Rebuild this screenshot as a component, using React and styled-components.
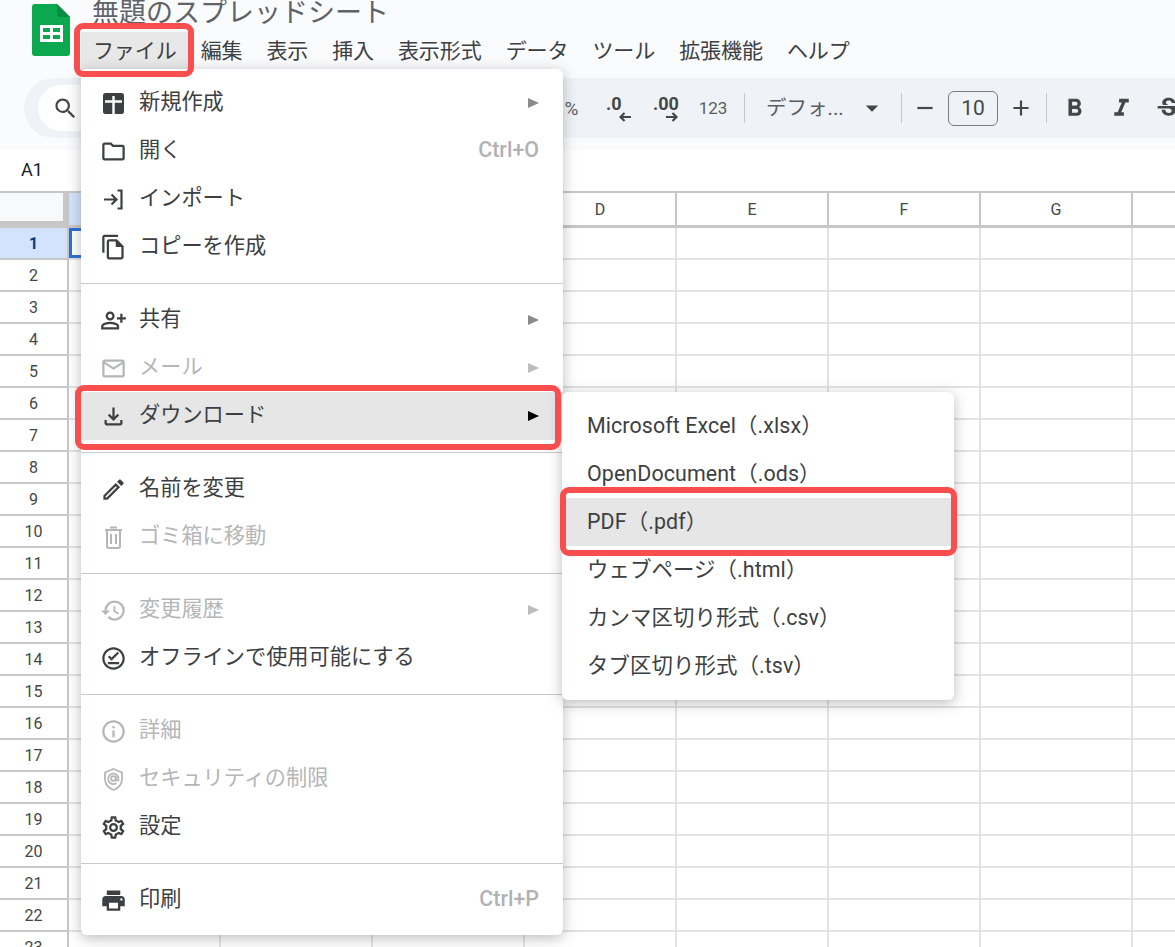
import styled, { createGlobalStyle } from "styled-components";
import {
  MdAdd,
  MdArrowDropDown,
  MdFormatBold,
  MdFormatItalic,
  MdHistory,
  MdInfoOutline,
  MdOutlineEdit,
  MdOutlineFileCopy,
  MdOutlineFileDownload,
  MdOutlineFolder,
  MdOutlineMail,
  MdOutlineOfflinePin,
  MdOutlinePersonAddAlt,
  MdOutlineSettings,
  MdPrint,
  MdRemove,
  MdSearch,
  MdStrikethroughS,
} from "react-icons/md";

const GlobalStyle = createGlobalStyle`
  html, body {
    margin: 0;
    height: 100%;
    background: #fff;
  }
  body {
    font-family: Roboto, "Noto Sans CJK JP", sans-serif;
    color: #3c4043;
  }
`;

function SheetsLogo() {
  return (
    <svg width="38" height="52" viewBox="0 0 38 52">
      <path
        d="M3 0H25L38 13V49a3 3 0 0 1-3 3H3a3 3 0 0 1-3-3V3a3 3 0 0 1 3-3Z"
        fill="#0ca84f"
      />
      <path d="M25 0L38 13H28a3 3 0 0 1-3-3Z" fill="#0b8a41" />
      <path
        d="M8 21H31V38H8ZM11 24V28H18V24ZM21 24V28H28V24ZM11 31V35H18V31ZM21 31V35H28V31Z"
        fill="#fff"
        fillRule="evenodd"
      />
    </svg>
  );
}

function NewIcon() {
  return (
    <svg width="27" height="27" viewBox="0 0 27 27">
      <rect x="3" y="3" width="21" height="21" rx="2.500" fill="currentColor" />
      <path d="M5 11.500H22M13.500 6V24" stroke="#fff" strokeWidth="2.400" fill="none" />
    </svg>
  );
}

function ImportIcon() {
  return (
    <svg width="27" height="27" viewBox="0 0 27 27" fill="none" stroke="currentColor" strokeWidth="2.200">
      <path d="M4 13.500H16M11.500 8.500L16.500 13.500L11.500 18.500" />
      <path d="M17.500 4.500H21.500V22.500H17.500" />
    </svg>
  );
}

function TrashIcon() {
  return (
    <svg width="27" height="27" viewBox="0 0 27 27" fill="none" stroke="currentColor" strokeWidth="2">
      <path d="M5 6H22M10 3.500H17M7 6V22a2 2 0 0 0 2 2H18a2 2 0 0 0 2-2V6" />
      <path d="M11 10V20M16 10V20" />
    </svg>
  );
}

function ShieldIcon() {
  return (
    <svg width="27" height="27" viewBox="0 0 27 27" fill="none" stroke="currentColor" strokeWidth="1.800">
      <path d="M13.500 3L22 6.500V13C22 18 18.500 22 13.500 24C8.500 22 5 18 5 13V6.500Z" />
      <circle cx="13.500" cy="12.500" r="2.300" />
      <path d="M18.500 13.500A5.200 5.200 0 1 0 16.500 17M15.800 10.500V13.500a1.400 1.400 0 0 0 2.700 0" />
    </svg>
  );
}

function SmallArrow({ flip }) {
  return (
    <svg width="12" height="10" viewBox="0 0 12 10" fill="none" stroke="currentColor" strokeWidth="2.200">
      {flip ? (
        <path d="M0 5H10M6.500 1L10.500 5L6.500 9" />
      ) : (
        <path d="M12 5H2M5.500 1L1.500 5L5.500 9" />
      )}
    </svg>
  );
}

const mainGroups = [
  [
    { icon: <NewIcon />, label: "新規作成", arrow: true },
    { icon: <MdOutlineFolder />, label: "開く", shortcut: "Ctrl+O" },
    { icon: <ImportIcon />, label: "インポート" },
    { icon: <MdOutlineFileCopy size={30} />, label: "コピーを作成" },
  ],
  [
    { icon: <MdOutlinePersonAddAlt size={29} />, label: "共有", arrow: true },
    { icon: <MdOutlineMail size={29} />, label: "メール", arrow: true, disabled: true },
    { icon: <MdOutlineFileDownload />, label: "ダウンロード", arrow: true, active: true },
  ],
  [
    { icon: <MdOutlineEdit />, label: "名前を変更" },
    { icon: <TrashIcon />, label: "ゴミ箱に移動", disabled: true },
  ],
  [
    { icon: <MdHistory />, label: "変更履歴", arrow: true, disabled: true },
    { icon: <MdOutlineOfflinePin size={29} />, label: "オフラインで使用可能にする" },
  ],
  [
    { icon: <MdInfoOutline size={29} />, label: "詳細", disabled: true },
    { icon: <ShieldIcon />, label: "セキュリティの制限", disabled: true },
    { icon: <MdOutlineSettings size={29} />, label: "設定" },
  ],
  [{ icon: <MdPrint size={29} />, label: "印刷", shortcut: "Ctrl+P" }],
];

const downloadItems = [
  "Microsoft Excel（.xlsx）",
  "OpenDocument（.ods）",
  "PDF（.pdf）",
  "ウェブページ（.html）",
  "カンマ区切り形式（.csv）",
  "タブ区切り形式（.tsv）",
];

const menuNames = ["編集", "表示", "挿入", "表示形式", "データ", "ツール", "拡張機能", "ヘルプ"];
const columns = ["A", "B", "C", "D", "E", "F", "G", "H"];
const rows = Array.from({ length: 23 }, (_, i) => i + 1);

export default function App() {
  return (
    <Page>
      <GlobalStyle />
      <Header>
        <TopRow>
          <LogoSlot>
            <SheetsLogo />
          </LogoSlot>
          <TitleColumn>
            <Title>無題のスプレッドシート</Title>
            <MenuBar>
              <MenuName $open>ファイル</MenuName>
              {menuNames.map((name) => (
                <MenuName key={name}>{name}</MenuName>
              ))}
            </MenuBar>
          </TitleColumn>
        </TopRow>
        <Toolbar>
          <SearchPill>
            <MdSearch />
          </SearchPill>
          <ToolText $width={47}>%</ToolText>
          <DecimalButton>
            <b>.0</b>
            <SmallArrow />
          </DecimalButton>
          <DecimalButton>
            <b>.00</b>
            <SmallArrow flip />
          </DecimalButton>
          <ToolText $width={48} $small>
            123
          </ToolText>
          <ToolDivider $before={7} />
          <FontPicker>
            <span>デフォ...</span>
            <MdArrowDropDown />
          </FontPicker>
          <ToolDivider />
          <ToolIcon>
            <MdRemove />
          </ToolIcon>
          <SizeBox>10</SizeBox>
          <ToolIcon>
            <MdAdd />
          </ToolIcon>
          <ToolDivider $before={2} $after={4} />
          <ToolIcon $wide>
            <MdFormatBold />
          </ToolIcon>
          <ToolIcon $wide>
            <MdFormatItalic />
          </ToolIcon>
          <ToolIcon $wide>
            <MdStrikethroughS />
          </ToolIcon>
        </Toolbar>
      </Header>

      <FormulaBar>A1</FormulaBar>

      <Sheet>
        <ColumnRow>
          <Corner />
          {columns.map((col) => (
            <ColumnHead key={col} $selected={col === "A"}>
              {col}
            </ColumnHead>
          ))}
        </ColumnRow>
        {rows.map((row) => (
          <SheetRow key={row}>
            <RowHead $selected={row === 1}>{row}</RowHead>
            {columns.map((col) => (
              <Cell key={col} $selected={row === 1 && col === "A"} />
            ))}
          </SheetRow>
        ))}
      </Sheet>

      <FileMenu>
        {mainGroups.map((group, i) => (
          <MenuGroup key={i}>
            {group.map((item) => (
              <MenuItem key={item.label} $disabled={item.disabled} $active={item.active}>
                <ItemIcon>{item.icon}</ItemIcon>
                <ItemLabel>{item.label}</ItemLabel>
                {item.shortcut && <Shortcut>{item.shortcut}</Shortcut>}
                {item.arrow && <Arrow $active={item.active} $disabled={item.disabled} />}
              </MenuItem>
            ))}
          </MenuGroup>
        ))}
      </FileMenu>

      <SubMenu>
        {downloadItems.map((label) => (
          <SubItem key={label} $active={label.startsWith("PDF")}>
            {label}
          </SubItem>
        ))}
      </SubMenu>

      <RedBox $x={74} $y={23} $w={120} $h={54} />
      <RedBox $x={75} $y={385} $w={486} $h={65} />
      <RedBox $x={560} $y={487} $w={397} $h={69} />
    </Page>
  );
}

const Page = styled.div`
  position: relative;
  width: 1175px;
  height: 947px;
  overflow: hidden;
  background: #fff;
`;

const Header = styled.header`
  height: 150px;
  background: #f9fbfd;
  box-sizing: border-box;
`;

const TopRow = styled.div`
  display: flex;
  height: 78px;
  padding-left: 32px;
`;

const LogoSlot = styled.div`
  width: 49px;
  padding-top: 4px;
`;

const TitleColumn = styled.div`
  display: flex;
  flex-direction: column;
`;

const Title = styled.div`
  height: 32px;
  margin-left: 11px;
  font-size: 27px;
  line-height: 27px;
  color: #5f6368;
  white-space: nowrap;
`;

const MenuBar = styled.nav`
  display: flex;
`;

const MenuName = styled.div`
  height: 38px;
  padding: 0 11.880px;
  font-size: 21px;
  line-height: 38px;
  color: #3c4043;
  white-space: nowrap;
  background: ${(p) => (p.$open ? "#e8e8e8" : "transparent")};
`;

const Toolbar = styled.div`
  display: flex;
  align-items: center;
  height: 60px;
  margin-left: 24px;
  padding-left: 14px;
  background: #eff3f8;
  border-radius: 30px 0 0 30px;
  color: #444746;
`;

const SearchPill = styled.div`
  display: flex;
  align-items: center;
  width: 510px;
  height: 46px;
  padding-left: 14px;
  box-sizing: border-box;
  flex-shrink: 0;
  background: #fff;
  border-radius: 23px;
  font-size: 27px;
`;

const ToolText = styled.div`
  width: ${(p) => p.$width}px;
  flex-shrink: 0;
  text-align: center;
  font-size: ${(p) => (p.$small ? "17px" : "19px")};
  color: #5a5d60;
`;

const DecimalButton = styled.div`
  display: flex;
  flex-direction: column;
  justify-content: center;
  width: 47px;
  height: 38px;
  padding: 0 11px;
  box-sizing: border-box;
  flex-shrink: 0;
  font-size: 18px;
  line-height: 17px;

  b {
    font-weight: 700;
    white-space: nowrap;
  }

  svg {
    align-self: flex-end;
    flex-shrink: 0;
  }
`;

const ToolDivider = styled.div`
  width: 1px;
  height: 30px;
  flex-shrink: 0;
  margin-left: ${(p) => p.$before || 0}px;
  margin-right: ${(p) => p.$after || 0}px;
  background: #c7c7c7;
`;

const FontPicker = styled.div`
  display: flex;
  align-items: center;
  justify-content: space-between;
  width: 156px;
  padding: 0 14px 0 21px;
  box-sizing: border-box;
  flex-shrink: 0;
  font-size: 20.500px;
  color: #5a5d60;

  span {
    margin-bottom: 4px;
  }

  svg {
    font-size: 30px;
    color: #444746;
  }
`;

const ToolIcon = styled.div`
  display: flex;
  align-items: center;
  justify-content: center;
  width: ${(p) => (p.$wide ? "47px" : "46px")};
  flex-shrink: 0;
  font-size: ${(p) => (p.$wide ? "29px" : "26px")};
`;

const SizeBox = styled.div`
  width: 50px;
  height: 35px;
  flex-shrink: 0;
  box-sizing: border-box;
  border: 1px solid #7a7d80;
  border-radius: 6px;
  text-align: center;
  font-size: 21px;
  line-height: 33px;
  color: #444746;
`;

const FormulaBar = styled.div`
  height: 41px;
  padding-left: 21px;
  font-size: 18px;
  line-height: 40px;
  color: #202124;
`;

const Sheet = styled.div`
  display: flex;
  flex-direction: column;
`;

const ColumnRow = styled.div`
  display: flex;
  height: 37px;
  box-sizing: border-box;
  border-top: 2px solid #c7c7c7;
`;

const Corner = styled.div`
  width: 69px;
  height: 100%;
  box-sizing: border-box;
  flex-shrink: 0;
  background: #f8f9fa;
  border-right: 6px solid #c7c7c7;
  border-bottom: 7px solid #c7c7c7;
`;

const ColumnHead = styled.div`
  width: 152px;
  flex-shrink: 0;
  box-sizing: border-box;
  border-right: 2px solid #c7c7c7;
  border-bottom: 3px solid #c7c7c7;
  background: ${(p) => (p.$selected ? "#d3e3fd" : "#fff")};
  text-align: center;
  font-size: 16px;
  line-height: 34px;
  color: #444746;
`;

const SheetRow = styled.div`
  display: flex;
  height: 32px;
`;

const RowHead = styled.div`
  width: 69px;
  flex-shrink: 0;
  box-sizing: border-box;
  border-right: 2px solid #c7c7c7;
  border-bottom: 2px solid #c7c7c7;
  background: ${(p) => (p.$selected ? "#d3e3fd" : "#fff")};
  text-align: center;
  font-size: 16px;
  font-weight: ${(p) => (p.$selected ? 700 : 400)};
  line-height: 31px;
  color: ${(p) => (p.$selected ? "#0b3c7a" : "#444746")};
`;

const Cell = styled.div`
  width: 152px;
  flex-shrink: 0;
  box-sizing: border-box;
  border-right: 2px solid #e2e2e2;
  border-bottom: 2px solid #e2e2e2;
  box-shadow: ${(p) => (p.$selected ? "inset 0 0 0 3px #2a6fdb" : "none")};
`;

const FileMenu = styled.div`
  position: absolute;
  left: 81px;
  top: 69px;
  width: 482px;
  padding-top: 10px;
  box-sizing: border-box;
  background: #fff;
  border-radius: 6px;
  box-shadow: 0 3px 14px rgba(60, 64, 67, 0.35);
`;

const MenuGroup = styled.div`
  padding-bottom: 12px;

  & + & {
    padding-top: 12px;
    border-top: 1px solid #c9c9c9;
  }

  &:last-child {
    padding-bottom: 11px;
  }
`;

const MenuItem = styled.div`
  display: flex;
  align-items: center;
  height: 48px;
  padding: 0 24px 0 19px;
  background: ${(p) => (p.$active ? "#e6e6e6" : "transparent")};
  color: ${(p) => (p.$disabled ? "#b4b6b8" : "#3c4043")};
`;

const ItemIcon = styled.div`
  display: flex;
  align-items: center;
  justify-content: center;
  width: 27px;
  height: 27px;
  margin-right: 12px;
  font-size: 27px;
`;

const ItemLabel = styled.div`
  flex: 1;
  padding-bottom: 2px;
  font-size: 21.200px;
  line-height: 46px;
  white-space: nowrap;
`;

const Shortcut = styled.div`
  padding-bottom: 2px;
  font-size: 21.400px;
  font-weight: 500;
  line-height: 46px;
  color: #b0b2b4;
`;

const Arrow = styled.div`
  width: 0;
  height: 0;
  border-top: 5.500px solid transparent;
  border-bottom: 5.500px solid transparent;
  border-left: 11px solid
    ${(p) => (p.$active ? "#000" : p.$disabled ? "#bdbdbd" : "#8a8a8a")};
`;

const SubMenu = styled.div`
  position: absolute;
  left: 562px;
  top: 392px;
  width: 392px;
  padding: 10px 0;
  box-sizing: border-box;
  background: #fff;
  border-radius: 6px;
  box-shadow: 0 3px 14px rgba(60, 64, 67, 0.35);
`;

const SubItem = styled.div`
  height: 48px;
  padding-left: 25px;
  font-size: 21.400px;
  letter-spacing: 0.100px;
  line-height: 48px;
  white-space: nowrap;
  color: #3c4043;
  background: ${(p) => (p.$active ? "#e6e6e6" : "transparent")};
`;

const RedBox = styled.div`
  position: absolute;
  left: ${(p) => p.$x}px;
  top: ${(p) => p.$y}px;
  width: ${(p) => p.$w}px;
  height: ${(p) => p.$h}px;
  box-sizing: border-box;
  border: 6px solid #f94e4e;
  border-radius: 9px;
`;
